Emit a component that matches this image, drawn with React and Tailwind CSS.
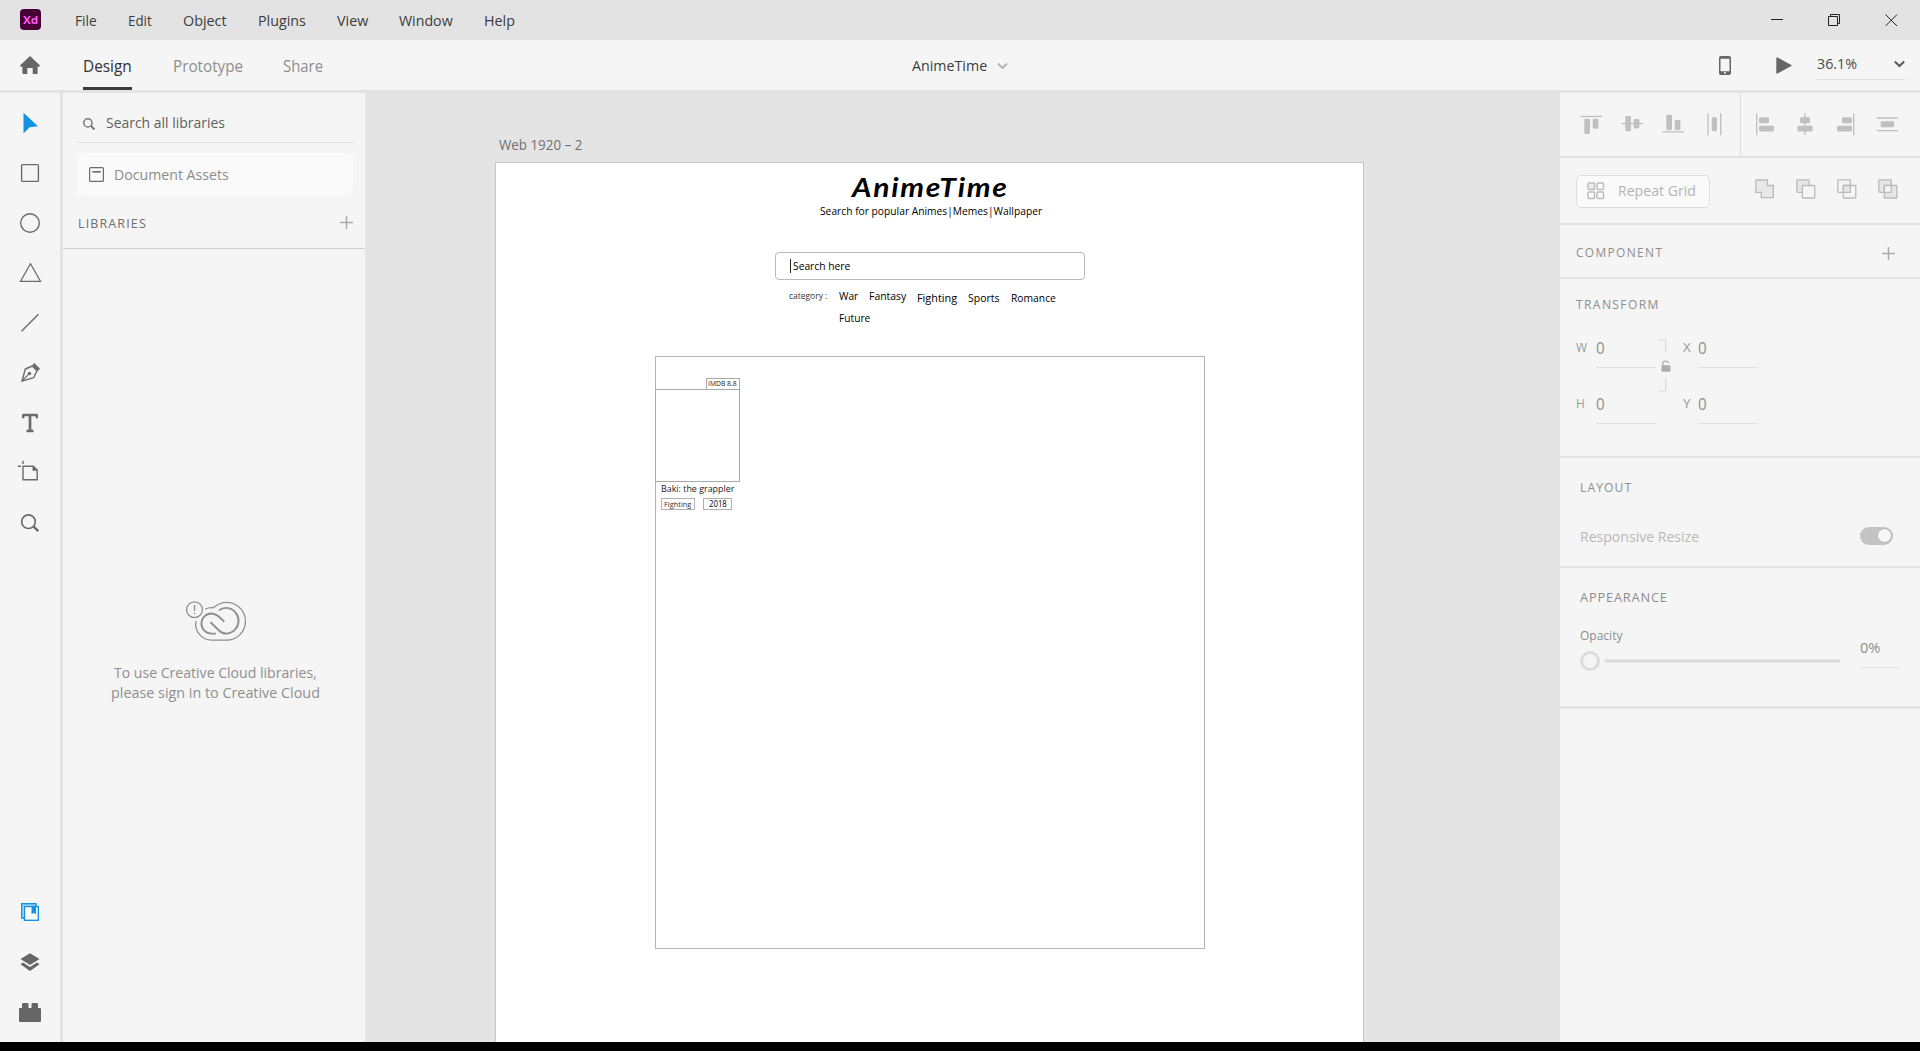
import { useLayoutEffect, useRef, useState } from 'react';

/* Single line of text, condensed or widened to fill an exact width. */
function T({ w, className = '', children }) {
  const ref = useRef(null);
  const [scale, setScale] = useState(1);
  useLayoutEffect(() => {
    setScale(w / ref.current.offsetWidth);
  }, [w]);
  return (
    <span className={`block shrink-0 leading-none whitespace-nowrap ${className}`} style={{ width: w }}>
      <span ref={ref} className="inline-block origin-left align-top" style={{ transform: `scaleX(${scale})` }}>
        {children}
      </span>
    </span>
  );
}

const MENUS = [
  ['File', 22], ['Edit', 24], ['Object', 44], ['Plugins', 47.5], ['View', 31.5], ['Window', 54], ['Help', 30.5],
];

function TitleBar() {
  return (
    <header className="flex h-10 shrink-0 bg-[#e3e3e3] text-[#3c3c3c]">
      <div className="mt-[9px] ml-5 flex h-[21px] w-[21px] items-center justify-center rounded-[4px] bg-[#470137] text-[#ff5cf4]">
        <T w={15} className="text-[11px] font-bold">Xd</T>
      </div>
      <nav className="ml-[34px] flex gap-[31px] pt-[12.500px] text-[15px]">
        {MENUS.map(([label, w]) => <T key={label} w={w}>{label}</T>)}
      </nav>
      <div className="mt-[13px] mr-[22px] ml-auto flex gap-11 text-[#222]">
        <svg width="13" height="14" stroke="currentColor" fill="none"><path d="M0 6.5H12" /></svg>
        <svg width="13" height="14" stroke="currentColor" fill="none"><path d="M.5 3.5H9.500V12.500H.5zM2.500 3.500V1.500H11.500V10.500H9.500" /></svg>
        <svg width="13" height="14" stroke="currentColor" fill="none"><path d="M.5 1.500L12 13M12 1.500L.5 13" /></svg>
      </div>
    </header>
  );
}

function Toolbar() {
  return (
    <div className="grid h-[50px] shrink-0 grid-cols-3 bg-[#f5f5f5]">
      <div className="flex text-[16px] text-[#8e8e8e]">
        <svg className="mt-4 ml-5 shrink-0" width="20" height="18" fill="#666">
          <path d="M10 0L20 9.500L19.200 10.800H17.600V17.200Q17.600 18 16.800 18H12.700V12H7.300V18H3.200Q2.400 18 2.400 17.200V10.800H.8L0 9.500z" />
        </svg>
        <div className="ml-[43px] flex w-[49px] flex-col justify-between pt-[18px] text-[#323232]">
          <T w={49}>Design</T>
          <div className="h-[3px] bg-[#3c3c3c]" />
        </div>
        <T w={70.5} className="mt-[18px] ml-[40.500px]">Prototype</T>
        <T w={40} className="mt-[18px] ml-[40px]">Share</T>
      </div>
      <div className="flex pt-[17.500px] pl-[271.500px] text-[15px] text-[#3c3c3c]">
        <T w={75}>AnimeTime</T>
        <svg className="mt-[4px] ml-[10px]" width="11" height="8" fill="none" stroke="#b0b0b0" strokeWidth="1.800"><path d="M1 1.500L5.500 6L10 1.500" /></svg>
      </div>
      <div className="flex justify-end pr-[15px]">
        <svg className="mt-4" width="12" height="19">
          <rect x=".75" y=".75" width="10.500" height="17.500" rx="1.300" fill="none" stroke="#666" strokeWidth="1.500" />
          <path d="M1 15.300H11V18.300H1z M1 .5H11V2.800H1z" fill="#666" /><circle cx="6" cy="16.800" r="1" fill="#f5f5f5" />
        </svg>
        <svg className="mt-[17px] ml-[45px]" width="16" height="17" fill="#666"><path d="M.3 1Q.3 0 1.300.4L15.300 7.900Q16 8.500 15.300 9.100L1.300 16.600Q.3 17 .3 16z" /></svg>
        <div className="mt-[16px] ml-[25px] flex h-6 w-[88px] justify-between border-b border-[#dfdfdf] text-[15px] text-[#4b4b4b]">
          <T w={40}>36.1%</T>
          <svg className="mt-[4px]" width="11" height="8" fill="none" stroke="#5a5a5a" strokeWidth="2"><path d="M.8 1.500L5.500 6L10.200 1.500" /></svg>
        </div>
      </div>
    </div>
  );
}

function Tool({ children }) {
  return <svg width="60" height="50" fill="none" stroke="#6b6b6b" strokeWidth="1.400">{children}</svg>;
}

function ToolRail() {
  return (
    <aside className="flex w-[60px] shrink-0 flex-col justify-between bg-[#f5f5f5] py-[5px]">
      <div className="flex flex-col">
        <Tool><path d="M23.500 14.700L38 28.300L29.600 29.200L23.500 35.500z" fill="#1492e6" stroke="none" /></Tool>
        <Tool><rect x="21.600" y="16.600" width="16.800" height="16.800" rx="1" /></Tool>
        <Tool><circle cx="30" cy="25" r="9.300" /></Tool>
        <Tool><path d="M30.500 15.800L40.500 33.300H20.500z" strokeWidth="1.300" /></Tool>
        <Tool><path d="M21.500 33.300L38.500 16.300" /></Tool>
        <Tool>
          <path d="M22 33.200L25.300 21L32.300 18L37 22.800L33.700 29.700z" strokeLinejoin="round" />
          <path d="M22 33L29.300 25.700" strokeWidth="1.200" />
          <circle cx="29.500" cy="25.500" r="1.700" fill="#6b6b6b" stroke="none" />
          <path d="M32.200 17.300L34.300 14.900L40 20.700L37.700 23z" fill="#6b6b6b" stroke="none" />
        </Tool>
        <Tool><path d="M23.200 20.300V17H36.800V20.300" strokeWidth="2.300" strokeLinejoin="round" /><path d="M30 17V33M26.500 33H33.500" strokeWidth="2.700" /></Tool>
        <Tool>
          <path d="M23 18.200H33.300L37.200 22V31.700H23z" /><path d="M32.500 18L37.500 22.800H32.500z" fill="#6b6b6b" stroke="none" />
          <path d="M18 18.200H21M23 12.700V16" />
        </Tool>
        <Tool><circle cx="28.500" cy="23.700" r="6.800" strokeWidth="1.600" /><path d="M33.500 28.500L38.300 33.200" strokeWidth="2.400" /></Tool>
      </div>
      <div className="flex flex-col">
        <Tool>
          <g stroke="#1492e6">
            <path d="M24 31H21.700V16.700H36V19" fill="#b9def7" /><rect x="24.500" y="19.500" width="13.800" height="13.800" fill="#fff" />
            <path d="M31.500 19.500H36V27.500L33.700 25.800L31.500 27.500z" fill="#1492e6" stroke="none" />
          </g>
        </Tool>
        <Tool>
          <g fill="#666" stroke="none"><path d="M30 16.200L39.500 22L30 27.900L20.500 22z" /><path d="M23 25.500L30 29.900L37 25.500L39.500 27.300L30 34L20.500 27.300z" /></g>
        </Tool>
        <Tool>
          <path d="M20 21H22V17.300Q22 16 23.300 16H27.300Q28.500 16 28.500 17.300V21H31.500V17.300Q31.500 16 32.700 16H36.700Q38 16 38 17.300V21H40Q41 21 41 22V34Q41 35 40 35H20Q19 35 19 34V22Q19 21 20 21z" fill="#666" stroke="none" />
        </Tool>
      </div>
    </aside>
  );
}

function Plus({ className }) {
  return <svg className={className} width="13" height="13" stroke="#aaa" strokeWidth="1.500"><path d="M0 6.500H13M6.500 0V13" /></svg>;
}

function LibraryPanel() {
  return (
    <aside className="flex w-[302px] shrink-0 flex-col bg-[#f5f5f5]">
      <div className="flex h-[156px] flex-col border-b border-[#d0d0d0] pr-3 pl-[15px]">
        <div className="flex h-[50px] shrink-0 border-b border-[#e0e0e0] text-[15px] text-[#5f5f5f]">
          <svg className="mt-[25px] ml-[5px]" width="12" height="12" fill="none" stroke="#777" strokeWidth="1.500"><circle cx="4.900" cy="4.900" r="4.100" /><path d="M7.800 7.800L11.500 11.500" strokeWidth="2" /></svg>
          <T w={119} className="mt-[21.500px] ml-[10.500px]">Search all libraries</T>
        </div>
        <div className="mt-[10px] flex h-[43px] shrink-0 rounded-[5px] bg-[#fafafa] text-[15px] text-[#8c8c8c]">
          <svg className="mt-[14px] ml-[11px]" width="15" height="15" fill="none" stroke="#6b6b6b" strokeWidth="1.200"><rect x=".6" y=".6" width="13.800" height="13.800" rx="1" /><path d="M3.300 4.800H11.700" strokeWidth="1.600" /></svg>
          <T w={115} className="mt-[14px] ml-[9.500px]">Document Assets</T>
        </div>
        <div className="flex justify-between text-[13px] text-[#6e6e6e]">
          <T w={69} className="mt-[20.500px] tracking-[1.200px]">LIBRARIES</T>
          <Plus className="mt-[20px]" />
        </div>
      </div>
      <div className="mt-[351px] flex flex-col items-center pl-[2px] text-[15px] text-[#8f8f8f]">
        <svg className="ml-[2px]" width="62" height="42" viewBox="185 600 62 42" fill="none" stroke="#8f8f8f" strokeWidth="1.300">
          <circle cx="194.500" cy="609.700" r="7.900" />
          <path d="M194.500 605V611" strokeWidth="1.400" /><path d="M194.500 612.700V614.200" strokeWidth="1.400" />
          <path d="M205.300 609.200Q209 607.300 213.300 607.800Q219.300 602.300 226.500 602.300A18.800 18.800 0 0 1 226.500 640.200H212A16 16 0 0 1 196 621" />
          <path d="M219 610.300Q222.300 607.800 226.800 607.900A12.900 12.900 0 0 1 226.800 633.600Q222 633.600 218.500 630L210.500 622.300" strokeWidth="1.900" />
          <path d="M224.300 621.700L218.500 616.200Q214.800 613.500 211.500 613.500A10 10 0 0 0 211.500 633.600H216" strokeWidth="1.900" />
        </svg>
        <T w={202.5} className="mt-[23px]">To use Creative Cloud libraries,</T>
        <T w={208.5} className="mt-[5px]">please sign in to Creative Cloud</T>
      </div>
    </aside>
  );
}

/* Free canvas: objects carry their own coordinates on the artboard. */
function Canvas() {
  return (
    <main className="relative flex-1 overflow-hidden bg-[#e4e4e4]">
      <T w={83} className="absolute top-[45px] left-[134px] text-[14px] text-[#707070]">Web 1920 – 2</T>
      <div className="absolute top-[69px] left-[130px] h-[900px] w-[869px] border border-[#c6c6c6] bg-white text-black">
        <T w={157} className="absolute top-[11px] left-[356px] font-['Lato'] text-[26px] font-bold tracking-[1.500px] italic">AnimeTime</T>
        <T w={222} className="absolute top-[41.800px] left-[323.500px] text-[11.500px]">Search for popular Animes|Memes|Wallpaper</T>
        <div className="absolute top-[89px] left-[279px] h-[28px] w-[309.500px] rounded-[4px] border border-[#b8b8b8]" />
        <div className="absolute top-[95.500px] left-[294px] h-[14px] w-px bg-[#222]" />
        <T w={57} className="absolute top-[97px] left-[297px] text-[11px]">Search here</T>
        <T w={38.5} className="absolute top-[128px] left-[293px] text-[9px] text-[#333]">category :</T>
        <T w={19.5} className="absolute top-[126.500px] left-[342.500px] text-[11px]">War</T>
        <T w={37} className="absolute top-[126.500px] left-[373px] text-[11px]">Fantasy</T>
        <T w={40.5} className="absolute top-[128.500px] left-[420.500px] text-[11px]">Fighting</T>
        <T w={31.5} className="absolute top-[128.500px] left-[472.300px] text-[11px]">Sports</T>
        <T w={45} className="absolute top-[128.500px] left-[515px] text-[11px]">Romance</T>
        <T w={31.5} className="absolute top-[148.500px] left-[342.500px] text-[11px]">Future</T>
        <div className="absolute top-[193px] left-[159px] h-[593px] w-[550px] border border-[#b4b4b4]">
          <div className="absolute top-[21px] left-[50px] h-[12px] w-[34px] border border-[#a8a8a8] pt-px pl-px">
            <T w={29} className="text-[7px] text-[#222]">IMDB 8.8</T>
          </div>
          <div className="absolute top-[32px] -left-px h-[93px] w-[85px] border border-[#a8a8a8]" />
          <T w={73} className="absolute top-[127.200px] left-[5px] text-[9.500px] text-[#222]">Baki: the grappler</T>
          <div className="absolute top-[141px] left-[5px] h-[12px] w-[34px] border border-[#b0b0b0] pt-[1.500px] pl-[2px]">
            <T w={27.5} className="text-[7px] text-[#333]">Fighting</T>
          </div>
          <div className="absolute top-[141px] left-[47px] h-[12px] w-[29px] border border-[#b0b0b0] pl-[4.500px]">
            <T w={18} className="text-[9.500px] font-medium">2018</T>
          </div>
        </div>
      </div>
    </main>
  );
}

/* [x, y, width, height] of each bar, and the path of the guide line. */
const ALIGN = [
  { line: 'M1.700 4.500H23', bars: [[5.3, 6.7, 5.7, 15.3], [13.7, 6.7, 5.7, 10]] },
  { line: 'M1.700 11.500H23', bars: [[5.3, 4, 5.7, 15.3], [13.7, 7, 5.7, 9.4]] },
  { line: 'M1.500 19.800H23', bars: [[5.3, 2.7, 5.7, 15.3], [13.7, 8, 5.7, 10]] },
  { line: 'M6 1.300V23.300M18.700 1.300V23.300', bars: [[9.7, 5.3, 5.3, 14]] },
];
const DISTRIBUTE = [
  { line: 'M3.700 1.300V23.300', bars: [[6, 5.3, 10, 6], [6, 13.7, 15, 5.7]] },
  { line: 'M11 1.300V23.300', bars: [[6, 5.3, 10, 6], [3.4, 13.7, 15.3, 5.7]] },
  { line: 'M19.700 1.300V23.300', bars: [[8, 5.3, 10, 6], [3, 13.7, 15, 5.7]] },
  { line: 'M1.700 6H23M1.700 18.700H23', bars: [[5.7, 9.3, 13.5, 6]] },
];

function AlignIcon({ line, bars }) {
  return (
    <svg width="24" height="24">
      <path d={line} stroke="#bebebe" strokeWidth="1.300" />
      {bars.map(([x, y, w, h]) => <rect key={x + '-' + y} x={x} y={y} width={w} height={h} rx="1.300" fill="#c0c0c0" />)}
    </svg>
  );
}

function BoolIcon({ children }) {
  return <svg width="20" height="20" fill="none" stroke="#bababa" strokeWidth="1.300">{children}</svg>;
}

function Field({ label, lw }) {
  return (
    <div className="flex text-[#8e8e8e]">
      <div className={`pt-[2px] text-[12.500px] text-[#999] ${lw === 7.5 ? 'w-[15px]' : 'w-5'}`}><T w={lw}>{label}</T></div>
      <div className="h-[28px] w-[60px] border-b border-[#e0e0e0] text-[16px]"><T w={8.5} className="pt-[.5px]">0</T></div>
    </div>
  );
}

function Inspector() {
  return (
    <aside className="flex w-[360px] shrink-0 flex-col bg-[#f5f5f5] text-[#8e8e8e]">
      <div className="flex h-[65px] shrink-0 border-b-2 border-[#e3e3e3]">
        <div className="flex w-[181px] gap-[17px] border-r border-[#dedede] pt-[19px] pl-[19px]">
          {ALIGN.map((a) => <AlignIcon key={a.line} {...a} />)}
        </div>
        <div className="flex gap-[16.600px] pt-[19px] pl-3">
          {DISTRIBUTE.map((a) => <AlignIcon key={a.line} {...a} />)}
        </div>
      </div>
      <div className="flex h-[67px] shrink-0 border-b-2 border-[#e3e3e3]">
        <div className="mt-[17px] ml-4 flex h-[33px] w-[134px] rounded-[5px] border border-[#dcdcdc] bg-[#fafafa] text-[15px] text-[#b4b4b4]">
          <svg className="mt-[6px] ml-[10px]" width="18" height="18" fill="none" stroke="#bababa" strokeWidth="1.400">
            <rect x="1" y="1" width="6.500" height="6.500" rx="1" fill="#eee" /><rect x="10" y="1" width="6.500" height="6.500" rx="1" />
            <rect x="1" y="10" width="6.500" height="6.500" rx="1" /><rect x="10" y="10" width="6.500" height="6.500" rx="1" />
          </svg>
          <T w={78} className="mt-[6.500px] ml-[12.500px]">Repeat Grid</T>
        </div>
        <div className="mt-[21px] ml-[44.500px] flex gap-[21px]">
          <BoolIcon><path d="M1.500 1H12.500V6.500H18.300V18.700H6.300V13.300H.8V1.500z" fill="#e8e8e8" /></BoolIcon>
          <BoolIcon><rect x=".8" y=".8" width="12.500" height="12.500" rx=".8" fill="#e6e6e6" /><rect x="6.300" y="6.500" width="12.500" height="12.500" rx=".8" fill="#f5f5f5" /></BoolIcon>
          <BoolIcon><rect x=".8" y=".8" width="12.500" height="12.500" rx=".8" /><rect x="6.300" y="6.500" width="12.500" height="12.500" rx=".8" /><path d="M6.300 6.500H13.300V13.300H6.300z" fill="#e6e6e6" /></BoolIcon>
          <BoolIcon><rect x=".8" y=".8" width="12.500" height="12.500" rx=".8" fill="#e6e6e6" /><rect x="6.300" y="6.500" width="12.500" height="12.500" rx=".8" fill="#e6e6e6" /><path d="M6.300 6.500H13.300V13.300H6.300z" fill="#f5f5f5" /></BoolIcon>
        </div>
      </div>
      <div className="flex h-[54px] shrink-0 justify-between border-b-2 border-[#e3e3e3] pr-[25px] pl-4 text-[13px]">
        <T w={87} className="mt-[20.500px] tracking-[1.500px]">COMPONENT</T>
        <Plus className="mt-[22px]" />
      </div>
      <div className="flex h-[179px] shrink-0 flex-col border-b-2 border-[#e3e3e3] pl-4 text-[13px]">
        <T w={83.5} className="mt-[18.500px] tracking-[1.500px]">TRANSFORM</T>
        <div className="mt-[29px] flex">
          <div className="flex flex-col gap-7"><Field label="W" lw={11.5} /><Field label="H" lw={8.5} /></div>
          <svg className="mt-[-1px] ml-[1px]" width="14" height="54" fill="none">
            <path d="M1 1H8.700V13.500M8.700 39V52H1" stroke="#dadada" strokeWidth="1.200" />
            <path d="M5.800 26.500V24Q5.800 22.100 8.500 22.100Q11 22.100 11.300 24" stroke="#adadad" strokeWidth="1.300" />
            <rect x="4.500" y="26.300" width="9" height="6.500" rx=".8" fill="#adadad" />
          </svg>
          <div className="ml-[12px] flex flex-col gap-7"><Field label="X" lw={7.5} /><Field label="Y" lw={7.5} /></div>
        </div>
      </div>
      <div className="flex h-[110px] shrink-0 flex-col border-b-2 border-[#e3e3e3] pr-[27px] pl-5 text-[13px]">
        <T w={52} className="mt-[22.500px] tracking-[1.200px]">LAYOUT</T>
        <div className="mt-[33px] flex justify-between text-[15px] text-[#b8b8b8]">
          <T w={119} className="mt-[2px]">Responsive Resize</T>
          <div className="flex h-[18px] w-[33px] items-center justify-end rounded-full bg-[#c4c4c4] pr-[2.500px]">
            <div className="h-[13px] w-[13px] rounded-full bg-[#f7f7f7] ring-1 ring-[#bababa]" />
          </div>
        </div>
      </div>
      <div className="flex h-[141px] shrink-0 border-b-[3px] border-[#e3e3e3] pl-5 text-[13px]">
        <div className="flex w-[260px] flex-col">
          <T w={88} className="mt-[22.500px] tracking-[.8px]">APPEARANCE</T>
          <T w={42.5} className="mt-[25px]">Opacity</T>
          <div className="mt-[9px] flex items-center gap-[5px]">
            <div className="h-5 w-5 rounded-full border-[3px] border-[#dcdcdc]" />
            <div className="h-[3px] flex-1 translate-y-[.5px] bg-[#dadada]" />
          </div>
        </div>
        <div className="mt-[71.500px] ml-5 h-[28px] w-10 border-b border-[#e0e0e0] text-[15px]"><T w={20.5}>0%</T></div>
      </div>
    </aside>
  );
}

export default function App() {
  return (
    <div className="flex h-[1051px] w-[1920px] flex-col overflow-hidden bg-[#e3e3e3] font-['Open_Sans','Noto_Sans',sans-serif]">
      <TitleBar />
      <Toolbar />
      <div className="flex min-h-0 flex-1 pt-[3px]">
        <ToolRail />
        <div className="ml-[3px] flex"><LibraryPanel /></div>
        <Canvas />
        <Inspector />
      </div>
      <div className="h-[9px] shrink-0 bg-black" />
    </div>
  );
}
